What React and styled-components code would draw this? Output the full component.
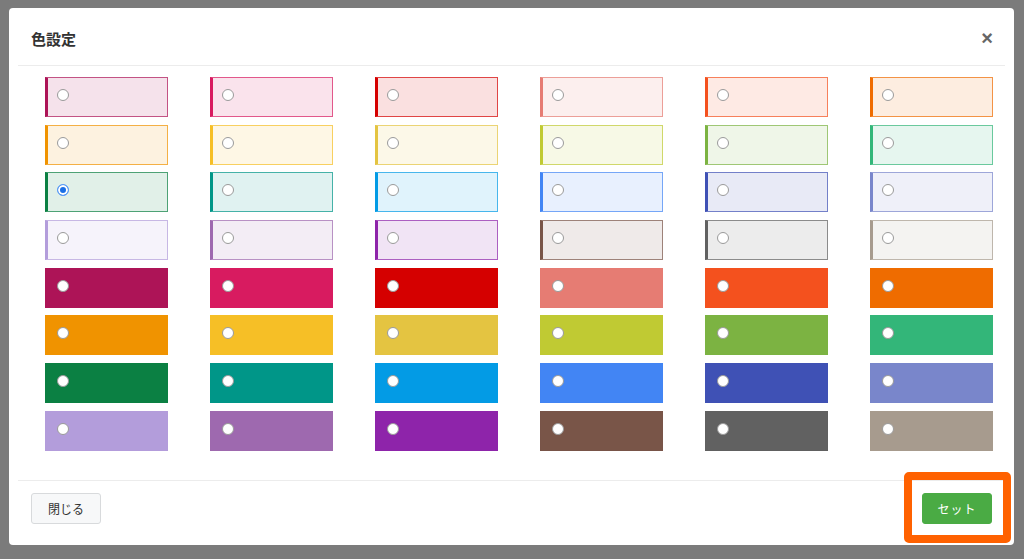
import React, { useState } from 'react';
import styled, { createGlobalStyle } from 'styled-components';

const COLORS = [
  '#AD1457', '#D81B60', '#D50000', '#E67C73', '#F4511E', '#EF6C00',
  '#F09300', '#F6BF26', '#E4C441', '#C0CA33', '#7CB342', '#33B679',
  '#0B8043', '#009688', '#039BE5', '#4285F4', '#3F51B5', '#7986CB',
  '#B39DDB', '#9E69AF', '#8E24AA', '#795548', '#616161', '#A79B8E',
];

// 淡色 24 個 + 濃色 24 個
const SWATCHES = [
  ...COLORS.map((c, i) => ({ id: `light-${i}`, color: c, light: true })),
  ...COLORS.map((c, i) => ({ id: `dark-${i}`, color: c, light: false })),
];

function App() {
  const [selected, setSelected] = useState('light-12');

  return (
    <>
      <GlobalStyle />
      <Backdrop>
        <Modal>
          <Header>
            <Title>色設定</Title>
            <CloseIcon aria-label="close">×</CloseIcon>
          </Header>
          <Body>
            <Grid>
              {SWATCHES.map((s) => (
                <Swatch key={s.id} $color={s.color} $light={s.light}>
                  <Radio
                    type="radio"
                    name="color"
                    checked={selected === s.id}
                    onChange={() => setSelected(s.id)}
                  />
                </Swatch>
              ))}
            </Grid>
          </Body>
          <Footer>
            <CloseButton>閉じる</CloseButton>
            <SetWrap>
              <SetButton>セット</SetButton>
              <Highlight />
            </SetWrap>
          </Footer>
        </Modal>
      </Backdrop>
    </>
  );
}

export default App;

const GlobalStyle = createGlobalStyle`
  html, body {
    margin: 0;
    padding: 0;
  }
  body {
    font-family: "Noto Sans CJK JP", "Noto Sans", sans-serif;
    background: #7b7b7b;
  }
`;

const Backdrop = styled.div`
  width: 1024px;
  height: 559px;
  box-sizing: border-box;
  padding: 8px 10px 14px 9px;
  background: #7b7b7b;
  overflow: hidden;
`;

const Modal = styled.div`
  height: 537px;
  background: #fff;
  border-radius: 4px;
  display: flex;
  flex-direction: column;
`;

const Header = styled.div`
  height: 57px;
  flex-shrink: 0;
  margin: 0 9px;
  padding: 0 13px;
  border-bottom: 1px solid #ececec;
  display: flex;
  align-items: center;
  justify-content: space-between;
`;

const Title = styled.h2`
  margin: 0;
  padding-top: 3px;
  font-size: 15px;
  font-weight: 700;
  color: #333;
`;

const CloseIcon = styled.span`
  font-family: "Liberation Sans", sans-serif;
  font-size: 20px;
  font-weight: 700;
  line-height: 1;
  color: #666;
  margin-right: -1px;
  margin-top: 3px;
`;

const Body = styled.div`
  height: 414px;
  flex-shrink: 0;
  padding: 11px 0 0 36px;
  box-sizing: border-box;
`;

const Grid = styled.div`
  display: grid;
  grid-template-columns: repeat(6, 123px);
  grid-auto-rows: 40px;
  column-gap: 42px;
  row-gap: 7.7px;
`;

const Swatch = styled.label`
  display: flex;
  align-items: flex-start;
  box-sizing: border-box;
  padding: 11px 0 0 ${(p) => (p.$light ? 9 : 11)}px;
  background: ${(p) => (p.$light ? `${p.$color}1f` : p.$color)};
  border: 1px solid ${(p) => (p.$light ? `${p.$color}b0` : `${p.$color}55`)};
  border-left: ${(p) => (p.$light ? `3px solid ${p.$color}` : `1px solid ${p.$color}55`)};
  cursor: pointer;
`;

const Radio = styled.input`
  appearance: none;
  margin: 0;
  width: 12px;
  height: 12px;
  border-radius: 50%;
  border: 1px solid #9a9a9a;
  background: #fff;
  box-sizing: border-box;

  &:checked {
    border: 1px solid #5a9cf8;
    background: #1a6fe6;
    box-shadow: inset 0 0 0 2px #fff;
  }
`;

const Footer = styled.div`
  flex: 1;
  margin: 0 9px;
  padding: 12px 13px 0;
  border-top: 1px solid #ececec;
  display: flex;
  align-items: flex-start;
  justify-content: space-between;
`;

const BaseButton = styled.button`
  width: 70px;
  height: 31px;
  border-radius: 3px;
  font-family: "Noto Sans CJK JP", sans-serif;
  font-size: 12px;
  cursor: pointer;
`;

const CloseButton = styled(BaseButton)`
  background: #f7f8f9;
  border: 1px solid #d8dadc;
  color: #333;
`;

const SetWrap = styled.div`
  position: relative;
`;

const SetButton = styled(BaseButton)`
  background: #4aab44;
  border: 1px solid #4aab44;
  color: #fff;
  letter-spacing: 1px;
`;

const Highlight = styled.div`
  position: absolute;
  left: -18px;
  top: -21px;
  width: 107px;
  height: 71px;
  box-sizing: border-box;
  border: 8px solid #ff6100;
  border-radius: 5px;
  pointer-events: none;
`;
